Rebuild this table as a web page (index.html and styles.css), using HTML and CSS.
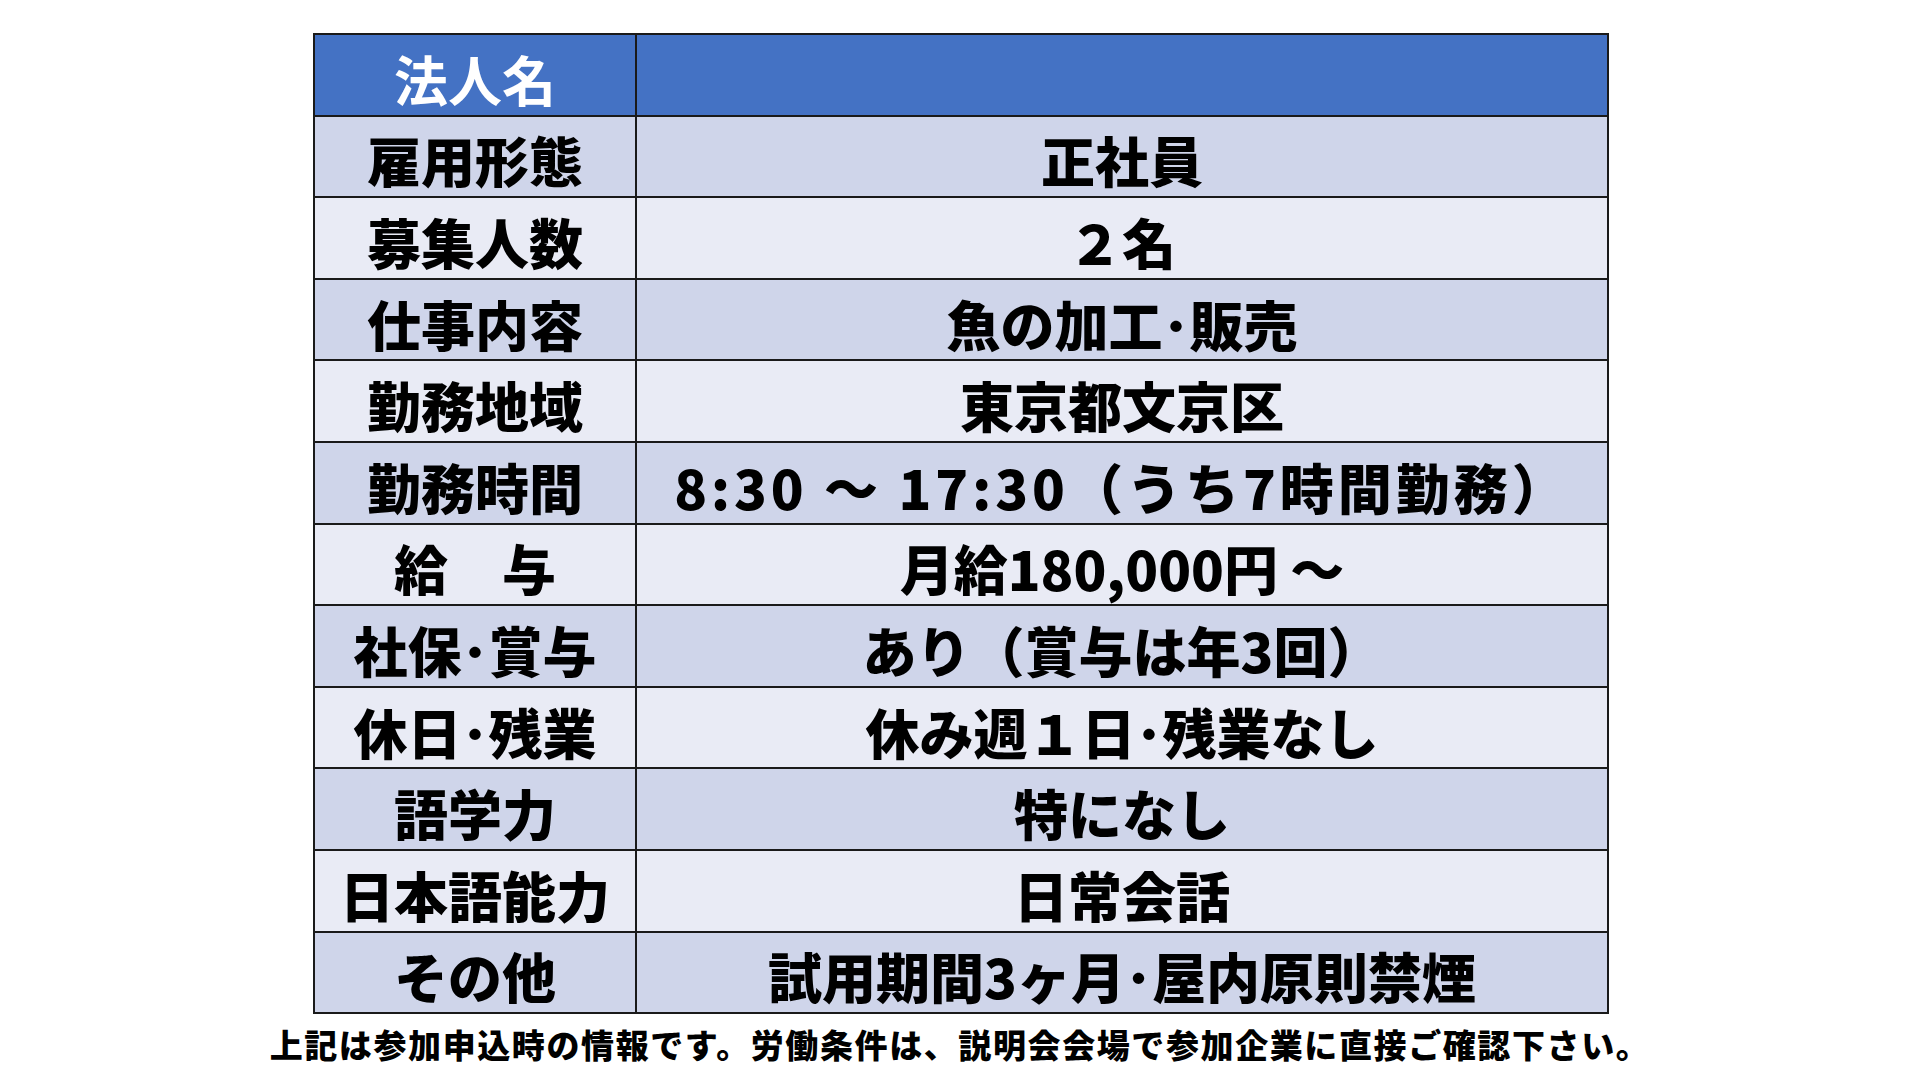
FILE: index.html
```html
<!DOCTYPE html>
<html lang="ja">
<head>
<meta charset="utf-8">
<link rel="stylesheet" href="styles.css">
</head>
<body>
<main class="page">
  <table class="job">
    <tr class="head"><th>法人名</th><td></td></tr>
    <tr class="odd"><th>雇用形態</th><td>正社員</td></tr>
    <tr class="even"><th>募集人数</th><td>２名</td></tr>
    <tr class="odd"><th>仕事内容</th><td>魚の加工･販売</td></tr>
    <tr class="even"><th>勤務地域</th><td>東京都文京区</td></tr>
    <tr class="odd"><th>勤務時間</th><td class="wide">8:30 ～ 17:30（うち7時間勤務）</td></tr>
    <tr class="even"><th>給　与</th><td>月給180,000円 ～</td></tr>
    <tr class="odd"><th>社保･賞与</th><td>あり（賞与は年3回）</td></tr>
    <tr class="even"><th>休日･残業</th><td>休み週１日･残業なし</td></tr>
    <tr class="odd"><th>語学力</th><td>特になし</td></tr>
    <tr class="even"><th>日本語能力</th><td>日常会話</td></tr>
    <tr class="odd"><th>その他</th><td>試用期間3ヶ月･屋内原則禁煙</td></tr>
  </table>
  <p class="note">上記は参加申込時の情報です。労働条件は、説明会会場で参加企業に直接ご確認下さい。</p>
</main>
</body>
</html>
```
FILE: styles.css
```css
html, body {
  margin: 0;
  padding: 0;
  background: #ffffff;
}
body {
  font-family: "Noto Sans CJK JP", "Noto Sans", sans-serif;
  color: #000;
}
.page {
  width: 1920px;
  height: 1080px;
  display: flex;
  flex-direction: column;
  align-items: center;
  padding-top: 33px;
  box-sizing: border-box;
}
.job {
  border-collapse: collapse;
  width: 1296px;
  margin-left: 2px;
  table-layout: fixed;
}
.job th, .job td {
  border: 2px solid #1a1a1a;
  height: 71.6px;
  padding: 8px 0 0 0;
  text-align: center;
  vertical-align: middle;
  font-size: 54px;
  font-weight: 900;
  line-height: 1;
  white-space: nowrap;
}
.job th {
  width: 320px;
}
.job td.wide {
  letter-spacing: 4px;
}
.head th, .head td {
  background: #4472c4;
  color: #ffffff;
  font-weight: 700;
}
.odd th, .odd td {
  background: #cfd5ea;
}
.even th, .even td {
  background: #e9ebf5;
}
.note {
  margin: 14px 0 0 0;
  font-size: 33px;
  font-weight: 900;
  line-height: 1;
  letter-spacing: 1.6px;
}
```
